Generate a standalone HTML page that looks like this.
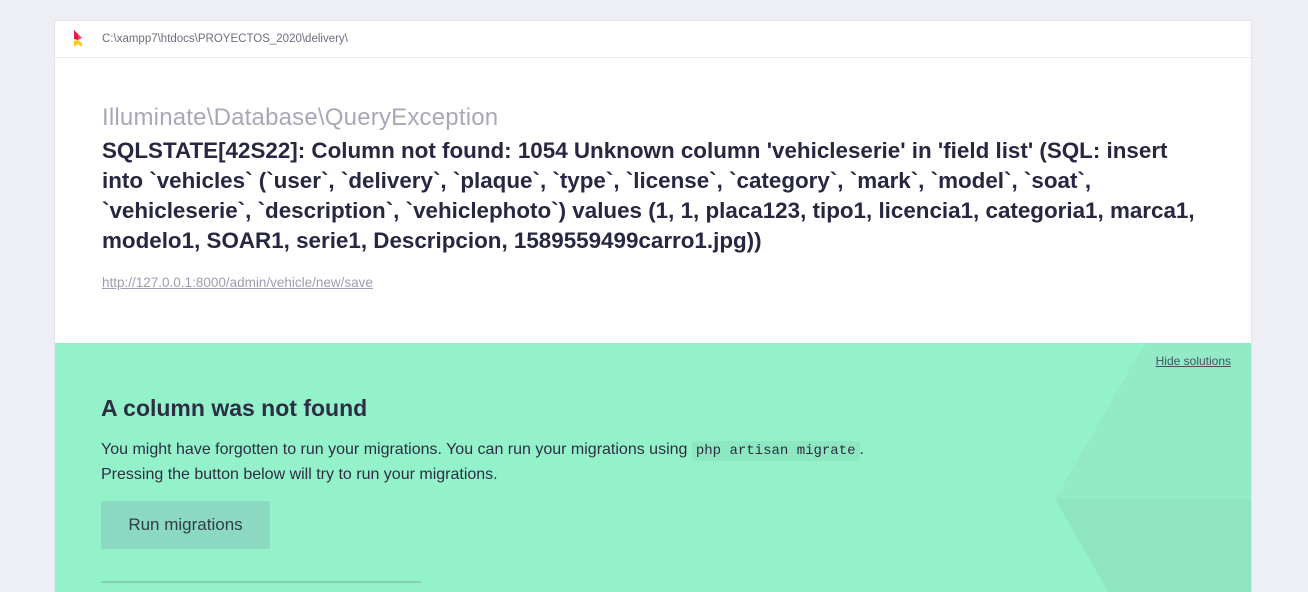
<!DOCTYPE html>
<html><head><meta charset="utf-8"><style>
html,body{margin:0;height:592px;overflow:hidden}
body{background:#eeeff4;font-family:"Liberation Sans",sans-serif;width:1308px;position:relative}
.card{position:absolute;left:54px;top:20px;width:1198px;height:572px;background:#fff;border:1px solid #e3e4ea;border-bottom:none;box-sizing:border-box;overflow:hidden}
.hdr{height:36px;border-bottom:1px solid #e8e9ef;position:relative}
.path{position:absolute;left:47px;top:12px;font-size:11.5px;color:#6f6d80}
.title{position:absolute;left:47px;top:83px;font-size:24px;color:#a9a7b9;letter-spacing:0.2px}
.msg{position:absolute;left:47px;top:115px;font-size:22.4px;font-weight:bold;color:#282742;line-height:30px;white-space:nowrap}
.url{position:absolute;left:47px;top:254px;font-size:13.5px;color:#9e9cb0;text-decoration:underline}
.sol{position:absolute;left:-1px;top:322px;width:1198px;height:250px;background:#94f2cb;overflow:hidden}
.hide{position:absolute;right:21px;top:11px;font-size:12px;color:#4a5060;text-decoration:underline}
h2{position:absolute;left:47px;top:52px;margin:0;font-size:23px;color:#2e2d44;font-weight:bold}
.p{position:absolute;left:47px;top:95px;font-size:16px;color:#2e2d44;line-height:24px;white-space:nowrap}
code{font-family:"Liberation Mono",monospace;font-size:14px;background:#8de8c2;padding:2px 4px;border-radius:2px}
.btn{position:absolute;left:47px;top:158px;width:169px;height:48px;background:#8bd9c0;color:#2e3d4a;font-size:17px;line-height:48px;text-align:center;border-radius:2px}
.line{position:absolute;left:47px;top:238px;width:320px;height:2px;background:#88cdb5}
</style></head><body>
<div class="card">
 <div class="hdr">
  <svg style="position:absolute;left:17px;top:9px" width="12" height="20" viewBox="0 0 12 20"><polygon points="2,0 6,4 6,10 2,9" fill="#e11d48"/><polygon points="6,4 10,8 6,10" fill="#f43f5e"/><polygon points="2,11 6,10 10,13 10,17 6,14 2,17" fill="#facc15"/></svg>
  <div class="path">C:\xampp7\htdocs\PROYECTOS_2020\delivery\</div>
 </div>
 <div class="title">Illuminate\Database\QueryException</div>
 <div class="msg">SQLSTATE[42S22]: Column not found: 1054 Unknown column 'vehicleserie' in 'field list' (SQL: insert<br>into `vehicles` (`user`, `delivery`, `plaque`, `type`, `license`, `category`, `mark`, `model`, `soat`,<br>`vehicleserie`, `description`, `vehiclephoto`) values (1, 1, placa123, tipo1, licencia1, categoria1, marca1,<br>modelo1, SOAR1, serie1, Descripcion, 1589559499carro1.jpg))</div>
 <div class="url">http://127.0.0.1:8000/admin/vehicle/new/save</div>
 <div class="sol">
  <svg style="position:absolute;left:0;top:0" width="1198" height="250"><polygon points="1091,0 1198,0 1198,156 1001,156" fill="#93eac6"/><polygon points="1001,156 1198,156 1198,250 1055,250" fill="#8fe5c2"/></svg>
  <div class="hide">Hide solutions</div>
  <h2>A column was not found</h2>
  <div class="p">You might have forgotten to run your migrations. You can run your migrations using <code>php artisan migrate</code>.<br>Pressing the button below will try to run your migrations.</div>
  <div class="btn">Run migrations</div>
  <div class="line"></div>
 </div>
</div>
</body></html>
